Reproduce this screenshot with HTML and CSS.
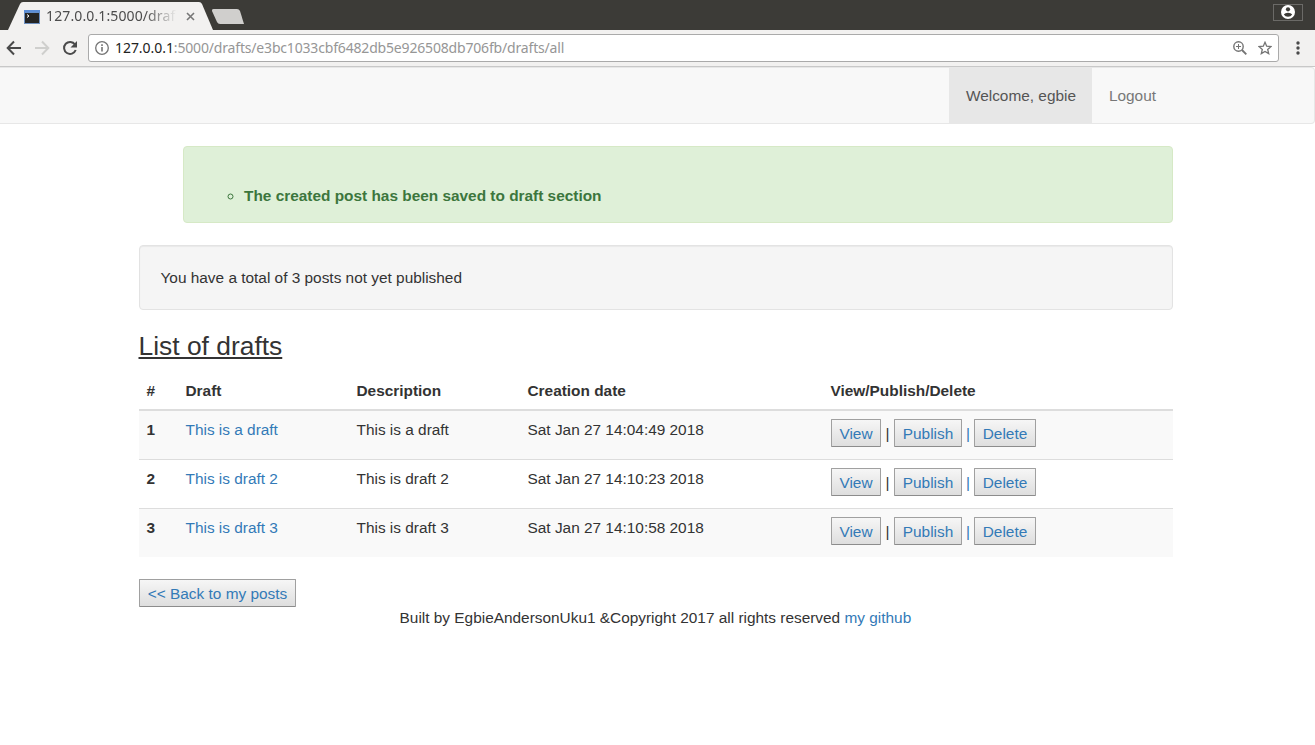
FILE: index.html
```html
<!DOCTYPE html>
<html lang="en">
<head>
<meta charset="utf-8">
<title>Drafts</title>
<link rel="stylesheet" href="styles.css">
</head>
<body>
<header class="browser">
  <div class="tabstrip">
    <svg class="tabshape" width="250" height="30" viewBox="0 0 250 30"><path d="M8 30L20 4Q21 2 23 2H199Q201 2 202 4L213 30Z" fill="#f2f1f0"/><path d="M213.500 9H237Q239 9 240 11L244 24H220Q218 24 217 22L212 11Q211.500 9 213.500 9Z" fill="#d0cfcd"/></svg>
    <div class="tab">
      <svg width="16" height="14" viewBox="0 0 16 14"><rect width="16" height="14" fill="#6d8fbf"/><rect width="16" height="2.500" fill="#5b8dd6"/><rect x="1" y="3" width="14" height="10" fill="#252525"/><path d="M3 4.500L5 6L3 7.500" fill="none" stroke="#fff"/></svg>
      <span class="tabtitle">127.0.0.1:5000/draf</span>
      <svg class="close" width="9" height="9" viewBox="0 0 9 9"><path d="M1 1L8 8M8 1L1 8" stroke="#777" stroke-width="1.600"/></svg>
    </div>
    <div class="user"><svg width="14" height="14" viewBox="0 0 14 14"><circle cx="7" cy="7" r="7" fill="#fff"/><circle cx="7" cy="4.300" r="2.100" fill="#3c3b37"/><path d="M2.800 9.600Q4 7.700 7 7.700T11.200 9.600Q9.800 11.800 7 11.800T2.800 9.600Z" fill="#3c3b37"/></svg></div>
  </div>
  <div class="toolbar">
    <svg class="navicons" width="80" height="36" viewBox="0 0 80 36" fill="none" stroke-width="2"><path d="M21 18H8M14 11.500L7.700 18L14 24.500" stroke="#4a4a4a"/><path d="M35 18H48M42 11.500L48.300 18L42 24.500" stroke="#cfcfcd"/><path d="M75 14.500A6 6 0 1 0 75.700 20" stroke="#4a4a4a"/><path d="M77 11V17.500H70.500Z" fill="#4a4a4a"/></svg>
    <div class="omnibox">
      <svg width="14" height="14" viewBox="0 0 14 14"><circle cx="7" cy="7" r="6.300" fill="none" stroke="#747474" stroke-width="1.300"/><path d="M7 6V10.500M7 3.200V4.900" stroke="#747474" stroke-width="1.600"/></svg>
      <span class="url"><b>127.0.0.1</b>:5000/drafts/e3bc1033cbf6482db5e926508db706fb/drafts/all</span>
      <svg class="zoomicon" width="14" height="14" viewBox="0 0 14 14" fill="none" stroke="#747474"><circle cx="5.500" cy="5.500" r="4.700" stroke-width="1.400"/><path d="M9 9L13.300 13.300" stroke-width="1.900"/><path d="M3 5.500H8M5.500 3V8"/></svg>
      <svg width="14" height="14" viewBox="0 0 14 14"><path d="M7 1.300L8.700 5.200L13 5.600L9.700 8.400L10.700 12.600L7 10.400L3.300 12.600L4.300 8.400L1 5.600L5.300 5.200Z" fill="none" stroke="#747474" stroke-width="1.300"/></svg>
    </div>
    <svg class="dots" width="4" height="14" viewBox="0 0 4 14" fill="#4a4a4a"><circle cx="2" cy="2" r="1.700"/><circle cx="2" cy="7" r="1.700"/><circle cx="2" cy="12" r="1.700"/></svg>
  </div>
</header>
<nav class="navbar"><a class="active">Welcome, egbie</a><a>Logout</a></nav>
<main class="container">
  <div class="alert"><ul><li><strong>The created post has been saved to draft section</strong></li></ul></div>
  <div class="well">You have a total of 3 posts not yet published</div>
  <h3>List of drafts</h3>
  <table>
    <colgroup><col class="c1"><col class="c2"><col class="c3"><col class="c4"><col></colgroup>
    <thead><tr><th>#</th><th>Draft</th><th>Description</th><th>Creation date</th><th>View/Publish/Delete</th></tr></thead>
    <tbody>
      <tr><th>1</th><td><a>This is a draft</a></td><td>This is a draft</td><td>Sat Jan 27 14:04:49 2018</td><td><div class="actions"><button class="view">View</button><i>|</i><button class="publish">Publish</button><i class="blue">|</i><button class="delete">Delete</button></div></td></tr>
      <tr><th>2</th><td><a>This is draft 2</a></td><td>This is draft 2</td><td>Sat Jan 27 14:10:23 2018</td><td><div class="actions"><button class="view">View</button><i>|</i><button class="publish">Publish</button><i class="blue">|</i><button class="delete">Delete</button></div></td></tr>
      <tr><th>3</th><td><a>This is draft 3</a></td><td>This is draft 3</td><td>Sat Jan 27 14:10:58 2018</td><td><div class="actions"><button class="view">View</button><i>|</i><button class="publish">Publish</button><i class="blue">|</i><button class="delete">Delete</button></div></td></tr>
    </tbody>
  </table>
  <button class="back">&lt;&lt; Back to my posts</button>
</main>
<footer>Built by EgbieAndersonUku1 &amp;Copyright 2017 all rights reserved <a>my github</a></footer>
</body>
</html>
```
FILE: styles.css
```css
* { box-sizing: border-box; }
body { margin: 0; background: #fff; color: #333; font: 15.4px/22px "Liberation Sans", Arial, sans-serif; overflow: hidden; }
svg { display: block; flex: none; }
a { color: #337ab7; }

.browser { font-family: "Noto Sans", "Open Sans", sans-serif; }
.tabstrip { position: relative; display: flex; justify-content: space-between; height: 30px; background: #3c3b37; }
.tabshape { position: absolute; left: 0; top: 0; }
.tab { position: relative; display: flex; align-items: center; padding: 3px 0 0 24px; }
.tabtitle { width: 131px; margin: -2px 0 0 6px; overflow: hidden; white-space: nowrap; color: #4c4c4c; font-size: 14px; letter-spacing: .12px; -webkit-mask-image: linear-gradient(90deg, #000 76%, transparent); mask-image: linear-gradient(90deg, #000 76%, transparent); }
.close { margin-left: 9px; }
.user { display: flex; justify-content: center; width: 30px; height: 17px; margin: 4px 12px 0 0; padding-top: 0; border: 1px solid #6b6a67; }
.toolbar { display: flex; align-items: center; height: 37px; background: #f2f1f0; border-bottom: 1px solid #c8c8c8; }
.navicons { margin-right: 8px; }
.omnibox { display: flex; align-items: center; width: 1191px; height: 28px; padding: 0 6px; border: 1px solid #aaa; border-radius: 3px; background: #fff; }
.url { margin-left: 6px; color: #969696; font-size: 14px; letter-spacing: -.175px; white-space: nowrap; }
.url b { color: #222; font-weight: 400; letter-spacing: -.05px; }
.zoomicon { margin-left: auto; margin-right: 11px; }
.dots { margin-left: 17px; }

.navbar { display: flex; justify-content: flex-end; height: 57px; padding-right: 142px; background: #f8f8f8; border: 1px solid #e7e7e7; border-left: 0; border-radius: 0 4px 4px 0; }
.navbar a { padding: 17px 16px 16px 16.5px; color: #777; white-space: nowrap; }
.navbar .active { width: 143px; background: #e7e7e7; color: #555; }

.container { width: 1034px; margin: 22px 0 0 139px; }
.alert { height: 77px; margin-left: 44px; padding: 38px 0 0 60px; border: 1px solid #d6e9c6; border-radius: 4px; background: #dff0d8; color: #3c763d; }
.alert ul { margin: 0; padding: 0; list-style: circle; }
.well { height: 65px; margin-top: 22px; padding: 21px 20.5px; border: 1px solid #e3e3e3; border-radius: 4px; background: #f5f5f5; box-shadow: inset 0 1px 1px rgba(0,0,0,.05); }
h3 { margin: 22px 0 11px -.5px; font-size: 26.4px; line-height: 29px; font-weight: 400; text-decoration: underline; }
table { width: 100%; table-layout: fixed; border-collapse: separate; border-spacing: 0; }
.c1 { width: 39px; }
.c2, .c3 { width: 171px; }
.c4 { width: 303px; }
th, td { padding: 8px 0 0 7.5px; text-align: left; vertical-align: top; }
td:last-child { padding-left: 8px; }
thead th { height: 39px; border-bottom: 2px solid #ddd; }
tbody th, tbody td { height: 49px; border-bottom: 1px solid #ddd; }
tbody tr:last-child > * { height: 48px; border-bottom: 0; }
tbody tr:nth-child(odd) { background: #f9f9f9; }
.actions { display: flex; align-items: center; }
.actions i { width: 13px; padding-top: 1px; text-align: center; font-style: normal; }
.actions .blue { width: 12px; color: #337ab7; }
button { height: 28px; padding: 2px 0 0; border: 1px solid #a0a0a0; border-bottom-color: #8c8c8c; border-radius: 1px; background: linear-gradient(#f6f6f6, #dedede); color: #337ab7; font: inherit; }
.view { width: 50px; }
.publish { width: 68px; }
.delete { width: 62px; }
.back { display: block; width: 157px; margin-top: 22px; }
footer { margin-left: 399.6px; white-space: nowrap; }
```
